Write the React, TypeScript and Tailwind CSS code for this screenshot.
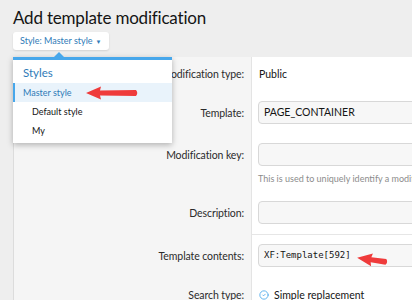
import { CircleCheck } from 'lucide-react';

const font = { fontFamily: "Lato, 'Open Sans', sans-serif" };

function Label({ text, pt = 'pt-[12px]' }: { text: string; pt?: string }) {
  return (
    <div className={`bg-[#f5f5f5] text-right pr-[7px] text-[10.5px] tracking-[-0.1px] leading-[16px] text-[#2b2b2b] ${pt}`}>{text}</div>
  );
}

function Input({ value, mono }: { value?: string; mono?: boolean }) {
  return (
    <div
      className={`h-[23px] rounded-[4px] border border-[#d8d8d8] bg-[#f7f7f7] pl-[5px] flex items-center text-[#141414] ${mono ? 'text-[9px]' : 'text-[10.5px]'}`}
      style={mono ? { fontFamily: "'DejaVu Sans Mono', 'Liberation Mono', monospace" } : undefined}
    >
      {value}
    </div>
  );
}

function Arrow({ className, w, h }: { className: string; w: number; h: number }) {
  return (
    <svg className={className} width={w} height={h} viewBox={`0 0 ${w} ${h}`}>
      <path
        d={`M1 ${h / 2} L${h} 1.5 L${h - 1} ${h / 2 - 2.5} L${w - 3} ${h / 2 - 3} Q${w - 0.5} ${h / 2} ${w - 3} ${h / 2 + 3} L${h - 1} ${h / 2 + 2.5} L${h} ${h - 1.5} Z`}
        fill="#ef3b3b"
      />
    </svg>
  );
}

export default function App() {
  return (
    <div className="relative w-[412px] h-[300px] overflow-hidden bg-[#eeeeee]" style={font}>
      <h1 className="pl-[13px] pt-[5px] text-[17px] tracking-[-0.2px] leading-[25px] text-[#141414]">Add template modification</h1>

      <div className="pl-[13px] pt-[2px]">
        <button className="h-[18px] px-[7px] rounded-[3px] bg-white shadow-[0_1px_2px_rgba(0,0,0,0.12)] text-[9px] text-[#2f7bb8] flex items-center gap-[3px]">
          Style: Master style
          <span className="text-[6px]">▼</span>
        </button>
      </div>

      <div className="ml-[13px] mt-[7px] border-l border-[#dcdcdc] w-[420px]">
        <div className="grid grid-cols-[237px_1fr] h-[36px]">
          <Label text="Modification type:" pt="pt-[9px]" />
          <div className="bg-white border-l border-[#e4e4e4] pl-[7px] pt-[9px] text-[10.5px] leading-[16px] text-[#141414]">Public</div>
        </div>
        <div className="grid grid-cols-[237px_1fr] h-[42px]">
          <Label text="Template:" />
          <div className="bg-white border-l border-[#e4e4e4] pl-[6px] pt-[8px]">
            <Input value="PAGE_CONTAINER" />
          </div>
        </div>
        <div className="grid grid-cols-[237px_1fr] h-[58px]">
          <Label text="Modification key:" />
          <div className="bg-white border-l border-[#e4e4e4] pl-[6px] pt-[8px]">
            <Input />
            <div className="mt-[6px] text-[9px] leading-[14px] text-[#8c8c8c] whitespace-nowrap">
              This is used to uniquely identify a modification
            </div>
          </div>
        </div>
        <div className="grid grid-cols-[237px_1fr] h-[42px]">
          <Label text="Description:" />
          <div className="bg-white border-l border-[#e4e4e4] border-b border-b-[#e6e6e6] pl-[6px] pt-[8px]">
            <Input />
          </div>
        </div>
        <div className="grid grid-cols-[237px_1fr] h-[44px]">
          <Label text="Template contents:" pt="pt-[13px]" />
          <div className="bg-white border-l border-[#e4e4e4] pl-[6px] pt-[9px]">
            <Input value="XF:Template[592]" mono />
          </div>
        </div>
        <div className="grid grid-cols-[237px_1fr] h-[40px]">
          <Label text="Search type:" pt="pt-[8px]" />
          <div className="bg-white border-l border-[#e4e4e4] pl-[7px] pt-[8px] flex items-start gap-[5px] text-[10.5px] leading-[16px] text-[#141414]">
            <CircleCheck className="mt-[3px] text-[#47a7eb]" size={10} strokeWidth={2} />
            Simple replacement
          </div>
        </div>
      </div>

      {/* styles menu */}
      <div className="absolute left-[13px] top-[57px] w-[159px] bg-white border-t-[3px] border-[#47a7eb] shadow-[0_2px_6px_rgba(0,0,0,0.28)] pb-[3px]">
        <div className="absolute left-[41px] -top-[8px] w-0 h-0 border-l-[5px] border-r-[5px] border-b-[5px] border-l-transparent border-r-transparent border-b-[#47a7eb]" />
        <div className="pl-[10px] pt-[4px] h-[23px] text-[11.5px] leading-[18px] text-[#2f7bb8]">Styles</div>
        <div className="h-[19px] bg-[#e9f3fb] border-l-2 border-[#47a7eb] pl-[8px] flex items-center text-[9px] text-[#2f7bb8]">Master style</div>
        <div className="h-[19px] pl-[19px] flex items-center text-[9px] text-[#141414]">Default style</div>
        <div className="h-[19px] pl-[19px] flex items-center text-[9px] text-[#141414]">My</div>
      </div>

      <Arrow className="absolute left-[85px] top-[85px]" w={54} h={16} />
      <Arrow className="absolute left-[356px] top-[252px] rotate-[8deg]" w={33} h={16} />
    </div>
  );
}
